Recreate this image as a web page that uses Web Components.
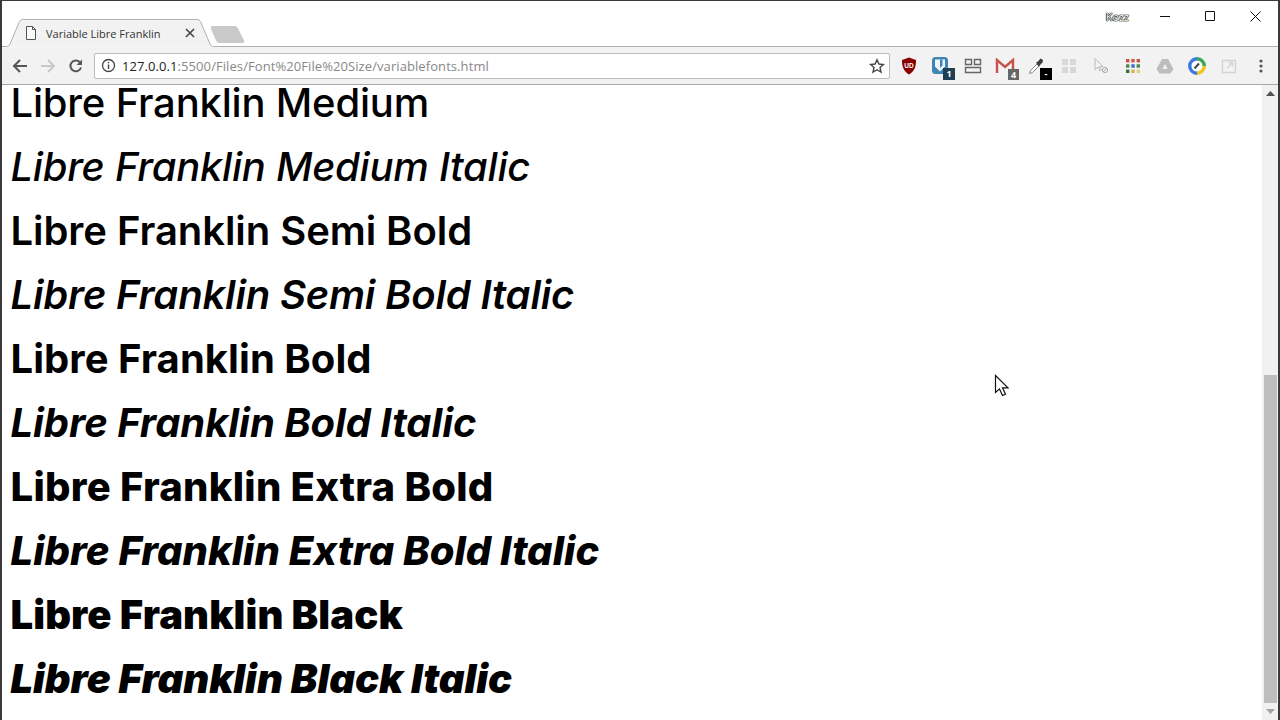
<!DOCTYPE html>
<html lang="en">
<head>
<meta charset="utf-8">
<title>Variable Libre Franklin</title>
<style>
  html,body{margin:0;height:100%;background:#fff;overflow:hidden}
</style>
</head>
<body>
<browser-window>
  <tab-strip title-text="Variable Libre Franklin"></tab-strip>
  <nav-toolbar url-host="127.0.0.1" url-rest=":5500/Files/Font%20File%20Size/variablefonts.html"></nav-toolbar>
  <page-view>
    <font-sample weight="500" spacing="-.19">Libre Franklin Medium</font-sample>
    <font-sample weight="500" italic spacing="-.27">Libre Franklin Medium Italic</font-sample>
    <font-sample weight="600" spacing="-.06">Libre Franklin Semi Bold</font-sample>
    <font-sample weight="600" italic spacing="-.17">Libre Franklin Semi Bold Italic</font-sample>
    <font-sample weight="700" spacing=".05">Libre Franklin Bold</font-sample>
    <font-sample weight="700" italic spacing="-.06">Libre Franklin Bold Italic</font-sample>
    <font-sample weight="800" spacing=".26">Libre Franklin Extra Bold</font-sample>
    <font-sample weight="800" italic spacing=".03">Libre Franklin Extra Bold Italic</font-sample>
    <font-sample weight="900" spacing=".1">Libre Franklin Black</font-sample>
    <font-sample weight="900" italic spacing="-.06">Libre Franklin Black Italic</font-sample>
  </page-view>
</browser-window>

<script>
class BrowserWindow extends HTMLElement {
    constructor() {
        super();
        const shadow = this.attachShadow({mode: 'open'});
        shadow.innerHTML = `
      <style>
        :host{display:flex;flex-direction:column;width:1280px;height:720px;box-sizing:border-box;border:solid #3a3a3a;border-width:1px 2px 0 2px;background:#fff;overflow:hidden;position:relative}
        svg{position:absolute;left:992px;top:373px}
      </style>
      <slot></slot>
      <svg width="16" height="24" viewBox="0 0 16 24"><path d="M1.5 1.5v17l4-3.6 3 6.6 3-1.3-3-6.4h5.5z" fill="#fff" stroke="#111" stroke-width="1.2"/></svg>
    `;
    }
}

class TabStrip extends HTMLElement {
    constructor() {
        super();
        const shadow = this.attachShadow({mode: 'open'});
        shadow.innerHTML = `
      <style>
        :host{display:flex;height:46px;flex:none;background:#fff;position:relative;align-items:flex-end;font-family:"Open Sans","Noto Sans",sans-serif}
        .shape{position:absolute;left:0;top:0}
        .tab{position:relative;display:flex;align-items:center;height:28px;margin-left:23px;width:170px}
        .title{font-size:11px;color:#333;margin-left:9px;white-space:nowrap;flex:1}
        .win{position:absolute;top:0;right:0;display:flex;height:30px;align-items:center}
        .win div{width:45px;display:flex;justify-content:center}
        .user{position:absolute;top:9px;right:149px;font-size:11px;line-height:14px;color:#fff;text-shadow:0 0 1px #000,0 0 1px #000,0 0 1px #000,0 0 1px #000}
      </style>
      <svg class="shape" width="1276" height="46">
        <path d="M211 45.500H1276" stroke="#b0b0b0"/>
        <path d="M-2 45.500H3.500C6 45.500 7 45 8 43L17.500 20.500Q18.500 18.500 20.500 18.500H195Q197.500 18.500 198.500 20.500L208 43C209 45 210 45.500 212 45.500" fill="#f2f2f2" stroke="#b0b0b0"/>
        <path d="M209 28Q208 25 211 25H233Q235 25 236 27.500L242 39.500Q243 42 240 42H217Q215 42 214 39.500z" fill="#c9c9c9"/>
      </svg>
      <div class="tab">
        <svg width="12" height="14" viewBox="0 0 12 14"><path d="M1.500 .5H7.500L10.500 3.500V13.500H1.500ZM7.500 .5V3.500H10.500" fill="#fafafa" stroke="#555"/></svg>
        <span class="title">${this.getAttribute('title-text')}</span>
        <svg width="10" height="10" viewBox="0 0 10 10"><path d="M1 1L9 9M9 1L1 9" stroke="#444" stroke-width="1.600"/></svg>
      </div>
      <span class="user">Kezz</span>
      <div class="win">
        <div><svg width="11" height="11"><path d="M0 5.500H10" stroke="#111"/></svg></div>
        <div><svg width="11" height="11"><path d="M.5 .5H9.500V9.500H.5Z" fill="none" stroke="#111"/></svg></div>
        <div><svg width="11" height="11"><path d="M.5 .5L10.500 10.500M10.500 .5L.5 10.500" stroke="#111"/></svg></div>
      </div>
    `;
    }
}

class NavToolbar extends HTMLElement {
    constructor() {
        super();
        const shadow = this.attachShadow({mode: 'open'});
        shadow.innerHTML = `
      <style>
        :host{display:flex;align-items:center;height:38px;flex:none;background:#f2f2f2;border-bottom:1px solid #a8a8a8;box-sizing:border-box;font-family:"Open Sans","Noto Sans",sans-serif;padding-left:4px}
        .btn{width:28px;height:28px;display:flex;align-items:center;justify-content:center;flex:none}
        .address{display:flex;align-items:center;flex:none;width:796px;height:26px;margin-left:4px;background:#fff;border:1px solid #bcbcbc;border-radius:2px;box-sizing:border-box}
        .info{margin-left:6px;flex:none}
        .url{flex:1;margin-left:6px;font-size:13px;letter-spacing:.08px;color:#888;white-space:nowrap}
        .url b{font-weight:400;color:#222}
        .star{margin-right:4px;flex:none}
        .exts{display:flex;margin-left:3px}
        .exts>div{width:32px;height:28px;display:flex;align-items:center;justify-content:center;position:relative}
        .badge{position:absolute;right:4px;bottom:0;min-width:11px;height:11px;font-size:9px;line-height:11px;text-align:center;color:#fff;font-weight:700}
      </style>
      <div class="btn"><svg width="16" height="16" viewBox="0 0 16 16"><path d="M15 8H2.500M8 2L2 8l6 6" fill="none" stroke="#555" stroke-width="2"/></svg></div>
      <div class="btn"><svg width="16" height="16" viewBox="0 0 16 16"><path d="M1 8H13.500M8 2l6 6-6 6" fill="none" stroke="#c8c8c8" stroke-width="2"/></svg></div>
      <div class="btn"><svg width="16" height="16" viewBox="0 0 16 16"><path d="M13 9.500A5.400 5.400 0 1 1 11.800 4.200" fill="none" stroke="#555" stroke-width="2"/><path d="M14 1.500V7H8.500z" fill="#555"/></svg></div>
      <div class="address">
        <svg class="info" width="15" height="15" viewBox="0 0 15 15"><circle cx="7.500" cy="7.500" r="6" fill="none" stroke="#444" stroke-width="1.300"/><path d="M7.500 6.500V11M7.500 4V5.300" stroke="#444" stroke-width="1.400"/></svg>
        <span class="url"><b>${this.getAttribute('url-host')}</b>${this.getAttribute('url-rest')}</span>
        <svg class="star" width="16" height="16" viewBox="0 0 16 16"><path d="M8 1.800l1.900 4.200 4.500.5-3.400 3 1 4.500L8 11.700 4 14l1-4.500-3.400-3 4.500-.5z" fill="none" stroke="#444" stroke-width="1.400"/></svg>
      </div>
      <div class="exts">
        <div><svg width="16" height="18" viewBox="0 0 16 18"><path d="M8 .5L15 3c0 7-1.500 11-7 14.500C2.500 14 1 10 1 3z" fill="#800"/><text x="8" y="11" font-size="6.500" font-family="Liberation Sans" font-weight="700" fill="#fff" text-anchor="middle">UD</text></svg></div>
        <div><svg width="20" height="20" viewBox="0 0 20 20"><rect x="1" y="1" width="16" height="17" rx="3.500" fill="#3f86b4"/><path d="M4 3.500h10v7L9 15.500 4 10.500z" fill="#eef4f8"/><path d="M9 3.500h2.500v6L9 12z" fill="#3f86b4"/></svg><span class="badge" style="background:#1f3f55;right:2px;width:12px;height:12px;line-height:12px">1</span></div>
        <div><svg width="18" height="16" viewBox="0 0 18 16"><path d="M1.500 1.500h6v5h-6zM10.500 1.500h6v5h-6zM1.500 9.500h15v5h-15z" fill="none" stroke="#666" stroke-width="1.400"/></svg></div>
        <div><svg width="20" height="16" viewBox="0 0 20 16"><path d="M2 15V2l8 7 8-7v13" fill="none" stroke="#c8524a" stroke-width="2.400"/></svg><span class="badge" style="background:#666;right:2px">4</span></div>
        <div><svg width="18" height="18" viewBox="0 0 18 18"><path d="M1.500 16.500l1-3 6.500-6.500 2 2-6.500 6.500z" fill="#fff" stroke="#888"/><path d="M8 5.500l2-1 2.500-3 2.500 1.500-.5 2.500-2.500 2.500-1 2z" fill="#3c3c3c"/></svg><span class="badge" style="background:#000;right:1px;width:12px;height:12px">-</span></div>
        <div><svg width="16" height="16" viewBox="0 0 16 16"><path d="M1 1h6v6H1zM9 1h6v6H9zM1 9h6v6H1zM9 9h6v6H9z" fill="#d8d8d8"/></svg></div>
        <div><svg width="16" height="18" viewBox="0 0 16 18"><path d="M2 1.500v11l3-2.500 2 4 1.500-1-2-3.500H10z" fill="none" stroke="#bbb"/><circle cx="12" cy="13" r="2.600" fill="none" stroke="#aaa"/><path d="M10.300 14.800l3.400-3.600" stroke="#aaa"/></svg></div>
        <div><svg width="14" height="14" viewBox="0 0 14 14"><rect x="0" y="0" width="3.400" height="3.400" fill="#c8524a"/><rect x="5.300" y="0" width="3.400" height="3.400" fill="#d6544a"/><rect x="10.600" y="0" width="3.400" height="3.400" fill="#c8524a"/><rect x="0" y="5.300" width="3.400" height="3.400" fill="#4a8a4a"/><rect x="5.300" y="5.300" width="3.400" height="3.400" fill="#3f6fc0"/><rect x="10.600" y="5.300" width="3.400" height="3.400" fill="#4a8a4a"/><rect x="0" y="10.600" width="3.400" height="3.400" fill="#3a6f3a"/><rect x="5.300" y="10.600" width="3.400" height="3.400" fill="#d9b24a"/><rect x="10.600" y="10.600" width="3.400" height="3.400" fill="#e2cc8a"/></svg></div>
        <div><svg width="18" height="16" viewBox="0 0 18 16"><path d="M6 1h6l5.500 10-3 4.500h-11L.5 11z" fill="#bdbdbd"/><path d="M9 6l2.500 5h-5z" fill="#f2f2f2"/></svg></div>
        <div><svg width="18" height="18" viewBox="0 0 18 18"><path d="M9 1.700A7.300 7.300 0 0 1 16.300 9" fill="none" stroke="#3aa757" stroke-width="3.400"/><path d="M16.300 9A7.300 7.300 0 0 1 9 16.300" fill="none" stroke="#f0c419" stroke-width="3.400"/><path d="M9 16.300A7.300 7.300 0 0 1 1.700 9 7.300 7.300 0 0 1 9 1.700" fill="none" stroke="#3b78e7" stroke-width="3.400"/><circle cx="9" cy="9" r="5" fill="#fff"/><path d="M6.500 11.500l4.500-5" stroke="#444" stroke-width="2"/></svg></div>
        <div><svg width="16" height="16" viewBox="0 0 16 16"><path d="M1.500 2.500h13v12h-13z" fill="none" stroke="#d4d4d4" stroke-width="1.400"/><path d="M6 10l5-5M7.500 4.500h4v4" fill="none" stroke="#d4d4d4" stroke-width="1.400"/></svg></div>
        <div><svg width="4" height="14" viewBox="0 0 4 14"><circle cx="2" cy="2" r="1.600" fill="#555"/><circle cx="2" cy="7" r="1.600" fill="#555"/><circle cx="2" cy="12" r="1.600" fill="#555"/></svg></div>
      </div>
    `;
    }
}

class PageView extends HTMLElement {
    constructor() {
        super();
        const shadow = this.attachShadow({mode: 'open'});
        shadow.innerHTML = `
      <style>
        :host{display:flex;flex:1;min-height:0;background:#fff}
        .content{flex:1;min-width:0;overflow:hidden;padding-left:8.5px}
        .rows{margin-top:-14px}
        .track{width:16px;flex:none;display:flex;flex-direction:column;background:#f1f1f1}
        .arrow{height:17px;flex:none;display:flex;align-items:center;justify-content:center}
        .space{height:273px;flex:none}
        .thumb{flex:1;background:#bdbdbd;margin:0 1px 0 2px}
      </style>
      <div class="content"><div class="rows"><slot></slot></div></div>
      <div class="track">
        <div class="arrow"><svg width="9" height="5"><path d="M4.500 0L9 5H0z" fill="#505050"/></svg></div>
        <div class="space"></div>
        <div class="thumb"></div>
        <div class="arrow"><svg width="9" height="5"><path d="M0 0H9L4.500 5z" fill="#a3a3a3"/></svg></div>
      </div>
    `;
    }
}

class FontSample extends HTMLElement {
    constructor() {
        super();
        const shadow = this.attachShadow({mode: 'open'});
        const weight = this.getAttribute('weight');
        const italic = this.hasAttribute('italic') ? 'italic' : 'normal';
        const spacing = this.getAttribute('spacing') || '0';
        shadow.innerHTML = `
      <style>
        :host{display:block;height:64px;line-height:64px;font-family:Inter,"Liberation Sans",sans-serif;font-size:40px;color:#000;white-space:nowrap;font-weight:${weight};font-style:${italic};letter-spacing:${spacing}px}
      </style>
      <slot></slot>
    `;
    }
}

customElements.define('browser-window', BrowserWindow);
customElements.define('tab-strip', TabStrip);
customElements.define('nav-toolbar', NavToolbar);
customElements.define('page-view', PageView);
customElements.define('font-sample', FontSample);
</script>
</body>
</html>
